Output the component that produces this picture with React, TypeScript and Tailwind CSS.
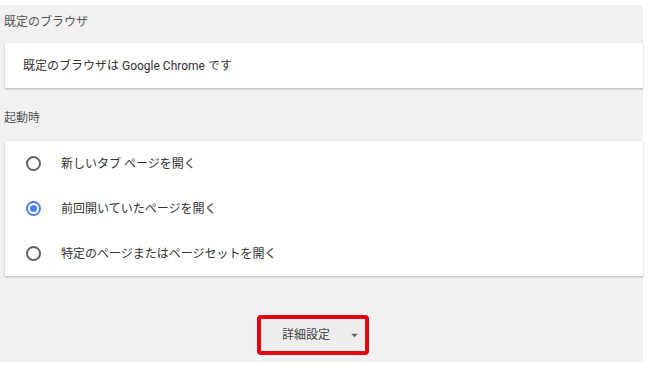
const options = [
  { label: "新しいタブ ページを開く", checked: false },
  { label: "前回開いていたページを開く", checked: true },
  { label: "特定のページまたはページセットを開く", checked: false },
];

function Radio({ checked }: { checked: boolean }) {
  return (
    <span
      className={
        "flex h-[15px] w-[15px] items-center justify-center rounded-full border-2 " +
        (checked ? "border-[#4a80f5]" : "border-[#5f6368]")
      }
    >
      {checked && <span className="h-[7px] w-[7px] rounded-full bg-[#4a80f5]" />}
    </span>
  );
}

export default function App() {
  return (
    <div
      className="h-[365px] w-[650px] overflow-hidden bg-white text-[12px] text-[#333]"
      style={{ fontFamily: "Roboto, 'Noto Sans CJK JP', sans-serif" }}
    >
      <div className="mt-[5px] h-[357px] w-[643px] bg-[#f1f1f1]">
        {/* Default browser */}
        <div className="h-[38px] pl-[4px] pt-[9px] leading-[16px] text-[#555]">既定のブラウザ</div>
        <div className="ml-[5px] flex h-[45px] items-center bg-white pl-[18px] shadow-[0_1px_2px_rgba(0,0,0,0.25)]">
          既定のブラウザは Google Chrome です
        </div>

        {/* On startup */}
        <div className="h-[53px] pl-[4px] pt-[22px] leading-[16px] text-[#555]">起動時</div>
        <div className="ml-[5px] flex flex-col bg-white shadow-[0_1px_2px_rgba(0,0,0,0.25)]">
          {options.map((o) => (
            <div key={o.label} className="flex h-[45px] items-center">
              <div className="flex w-[56px] justify-center">
                <Radio checked={o.checked} />
              </div>
              <span>{o.label}</span>
            </div>
          ))}
        </div>

        {/* Advanced */}
        <div className="flex justify-center pt-[39px]">
          <div className="ml-[-17px] flex h-[40px] w-[112px] items-center rounded-[4px] border-[4px] border-[#e60012] bg-[#ededed]">
            <span className="ml-[21px] text-[#444]">詳細設定</span>
            <svg width="9" height="5" viewBox="0 0 10 6" className="ml-[20px]">
              <path d="M1 1h8L5 5z" fill="#666" />
            </svg>
          </div>
        </div>
      </div>
    </div>
  );
}
